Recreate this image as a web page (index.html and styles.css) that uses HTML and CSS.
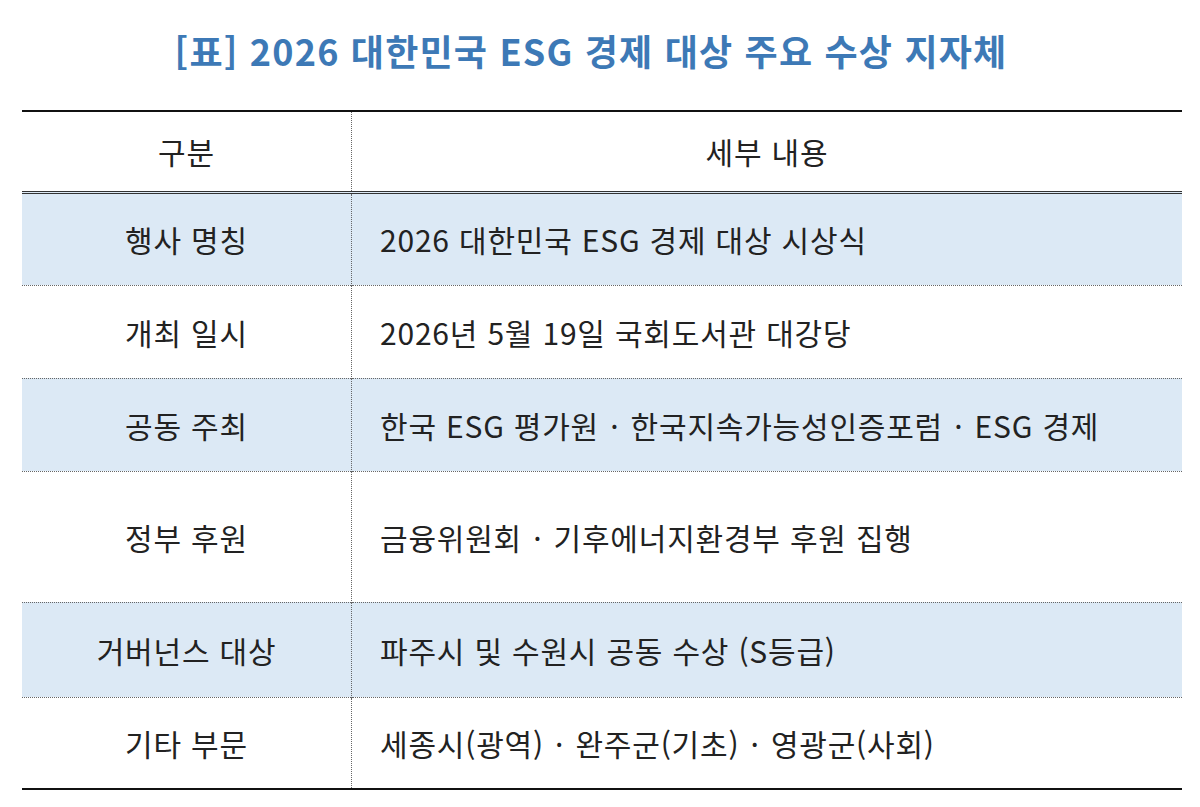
FILE: index.html
```html
<!DOCTYPE html>
<html lang="ko">
<head>
<meta charset="utf-8">
<link rel="stylesheet" href="styles.css">
</head>
<body>
<div class="page">
  <h1 class="title">[표] 2026 대한민국 ESG 경제 대상 주요 수상 지자체</h1>
  <table class="tbl">
    <thead>
      <tr class="head"><th class="c1">구분</th><th class="c2h">세부 내용</th></tr>
    </thead>
    <tbody>
      <tr class="r1 blue"><td class="c1">행사 명칭</td><td class="c2">2026 대한민국 ESG 경제 대상 시상식</td></tr>
      <tr class="r2"><td class="c1">개최 일시</td><td class="c2">2026년 5월 19일 국회도서관 대강당</td></tr>
      <tr class="r3 blue"><td class="c1">공동 주최</td><td class="c2">한국 ESG 평가원 <span class="dot">·</span> 한국지속가능성인증포럼 <span class="dot">·</span> ESG 경제</td></tr>
      <tr class="r4"><td class="c1">정부 후원</td><td class="c2">금융위원회 <span class="dot">·</span> 기후에너지환경부 후원 집행</td></tr>
      <tr class="r5 blue"><td class="c1">거버넌스 대상</td><td class="c2">파주시 및 수원시 공동 수상 (S등급)</td></tr>
      <tr class="r6 last"><td class="c1">기타 부문</td><td class="c2">세종시(광역) <span class="dot">·</span> 완주군(기초) <span class="dot">·</span> 영광군(사회)</td></tr>
    </tbody>
  </table>
</div>
</body>
</html>
```

FILE: styles.css
```css
html, body {
  margin: 0;
  padding: 0;
  background: #ffffff;
}
.page {
  padding: 0 18px 0 22px;
  font-family: "Noto Sans CJK KR", "Noto Sans", sans-serif;
  color: #222222;
}
.title {
  margin: 0;
  height: 110px;
  box-sizing: border-box;
  padding: 25px 22px 0 0;
  text-align: center;
  font-size: 36px;
  line-height: 50px;
  font-weight: 700;
  color: #3d79b6;
  letter-spacing: 1.2px;
}
.tbl {
  width: 1160px;
  border-collapse: collapse;
  border-top: 2px solid #111111;
  border-bottom: 2px solid #111111;
  font-size: 30px;
  letter-spacing: 0.8px;
}
.tbl th, .tbl td {
  padding: 0;
  font-weight: 400;
}
.c1 {
  width: 329px;
  text-align: center;
  border-right: 1px dotted #666666;
}
.c2h {
  text-align: center;
}
.c2 {
  text-align: left;
  padding-left: 28px !important;
}
.dot {
  margin: 0 2px;
}
.head {
  height: 81px;
  border-bottom: 3px double #333333;
}
.tbl tbody tr {
  border-bottom: 1px dotted #666666;
}
.tbl tbody tr.last {
  border-bottom: 2px solid #111111;
}
.blue {
  background: #dce9f5;
}
.r1 { height: 93px; }
.r2 { height: 93px; }
.r3 { height: 93px; }
.r4 { height: 131px; }
.r5 { height: 95px; }
.r6 { height: 92px; }
```
